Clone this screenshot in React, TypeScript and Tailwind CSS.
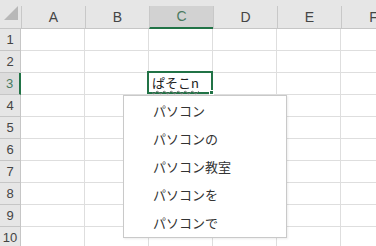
import React from "react";

const cols = ["A", "B", "C", "D", "E", "F"];
const rows = [1, 2, 3, 4, 5, 6, 7, 8, 9, 10];
const items = ["パソコン", "パソコンの", "パソコン教室", "パソコンを", "パソコンで"];

const jp = { fontFamily: '"Noto Sans CJK JP", "Noto Sans", sans-serif' };

export default function App() {
  return (
    <div
      className="relative w-[376px] h-[246px] overflow-hidden bg-white text-[#444]"
      style={{ fontFamily: '"Liberation Sans", Arial, sans-serif' }}
    >
      {/* column headers */}
      <div className="flex h-[29px] bg-[#e6e6e6] border-b border-[#c6c6c6]">
        <div className="relative w-[21px] shrink-0">
          <div className="absolute left-[4px] top-[6px] w-0 h-0 border-l-[14px] border-l-transparent border-b-[14px] border-b-[#b8b8b8]" />
        </div>
        {cols.map((c) => (
          <div key={c} className="w-[64px] shrink-0 flex items-end">
            {c === "C" ? (
              <div className="flex h-[23px] -mb-px w-full items-center justify-center bg-[#d2d2d2] border-l border-[#c8c8c8] border-b-2 border-b-[#217346] text-[14px] text-[#4a7a60]">
                {c}
              </div>
            ) : (
              <div className="flex h-[22px] w-full items-center justify-center border-l border-[#c8c8c8] text-[14px]">
                {c}
              </div>
            )}
          </div>
        ))}
      </div>

      {/* rows */}
      {rows.map((r) => (
        <div key={r} className="flex h-[22px]">
          <div
            className={
              r === 3
                ? "w-[21px] shrink-0 flex items-center justify-center bg-[#dcdcdc] border-r-2 border-[#217346] border-b border-b-[#c6c6c6] text-[#4a7a60] text-[13px]"
                : "w-[21px] shrink-0 flex items-center justify-center bg-[#e6e6e6] border-r border-[#c6c6c6] border-b text-[13px]"
            }
          >
            {r}
          </div>
          {cols.map((c) => (
            <div
              key={c}
              className="relative w-[64px] shrink-0 border-r border-b border-[#dedede]"
            >
              {r === 3 && c === "C" && (
                <div className="absolute -left-[2px] -top-[2px] w-[66px] h-[23px] border-2 border-[#217346] z-10">
                  <span
                    className="absolute left-[3px] top-[1px] text-[13px] text-[#222] leading-[17px] underline decoration-wavy decoration-[#777] decoration-1 underline-offset-2"
                    style={jp}
                  >
                    ぱそこn
                  </span>
                  <div className="absolute -right-[3px] -bottom-[3px] w-[5px] h-[5px] bg-[#217346] border border-white" />
                </div>
              )}
            </div>
          ))}
        </div>
      ))}

      {/* IME candidate list */}
      <div className="absolute left-[123px] top-[95px] w-[164px] h-[143px] bg-white border border-[#c9c9c9] shadow-[1px_1px_2px_rgba(0,0,0,0.08)] z-20 flex flex-col pt-[1px]">
        {items.map((t) => (
          <div
            key={t}
            className="h-[28px] flex items-center pl-[29px] text-[13px] text-[#333]"
            style={jp}
          >
            {t}
          </div>
        ))}
      </div>
    </div>
  );
}
